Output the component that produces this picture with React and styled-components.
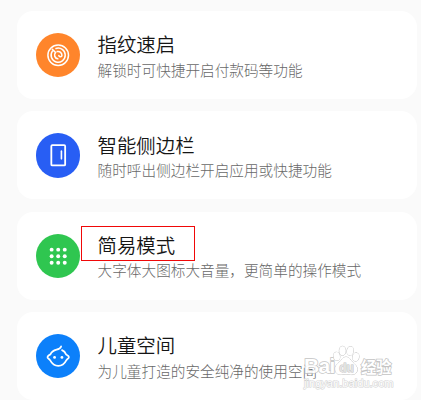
import React from "react";
import styled, { createGlobalStyle } from "styled-components";

const GlobalStyle = createGlobalStyle`
  * { box-sizing: border-box; }
  body {
    margin: 0;
    overflow: hidden;
    background: #fafafa;
    font-family: "Noto Sans CJK SC", sans-serif;
  }
`;

const Page = styled.main`
  position: relative;
  width: 421px;
  height: 400px;
  padding: 11px 4px 0 17px;
  overflow: hidden;
`;

const CardList = styled.div`
  display: flex;
  flex-direction: column;
  gap: 12.4px;
`;

const Card = styled.section`
  display: flex;
  flex: none;
  align-items: center;
  gap: 17.2px;
  height: 88px;
  padding-left: 19px;
  border-radius: 16px;
  background: #fff;
`;

const IconCircle = styled.div`
  display: flex;
  flex: none;
  width: 44.4px;
  height: 44.4px;
  border-radius: 50%;
  background: ${(p) => p.$color};

  svg { width: 100%; height: 100%; }
`;

const CardText = styled.div`
  display: flex;
  flex-direction: column;
  padding-top: 0.8px;
  white-space: nowrap;
`;

const Title = styled.h2`
  position: relative;
  margin: 0;
  align-self: flex-start;
  font-size: 19.4px;
  line-height: 28px;
  font-weight: 350;
  color: #151515;
`;

const Subtitle = styled.p`
  margin: 0.5px 0 0;
  font-size: 14.65px;
  line-height: 22px;
  font-weight: 300;
  color: #686868;
`;

const Highlight = styled.span`
  position: absolute;
  left: -16.6px;
  top: -5px;
  width: 114px;
  height: 35px;
  border: 1px solid #f00808;
`;

const Watermark = styled.div`
  position: absolute;
  left: 304px;
  top: 345px;
  width: 90px;
  color: #fff;
  font-family: "Liberation Sans", "Noto Sans CJK SC", sans-serif;
  -webkit-text-stroke: 1.5px #bdbdbd;
  paint-order: stroke fill;
  opacity: 0.9;
`;

const Brand = styled.div`
  display: flex;
  align-items: flex-end;
  height: 31px;
`;

const BrandText = styled.span`
  width: 28px;
  font-size: 21px;
  line-height: 21px;
  font-weight: 700;
  letter-spacing: -0.7px;
`;

const BrandChinese = styled.span`
  margin-left: 1px;
  font-family: "Noto Sans CJK SC", sans-serif;
  font-size: 15.5px;
  line-height: 19px;
  font-weight: 700;
  letter-spacing: -0.5px;
  white-space: nowrap;
`;

const Paw = styled.svg`
  flex: none;
  width: 28px;
  height: 31px;
`;

const Site = styled.div`
  font-size: 11px;
  line-height: 15px;
  letter-spacing: 0.05px;
  white-space: nowrap;
  -webkit-text-stroke: 1.1px #cecece;
`;

const FingerprintIcon = () => (
  <svg viewBox="0 0 44 44" fill="none" stroke="#fff" strokeWidth="1.5" strokeLinecap="round">
    <circle cx="22" cy="22" r="10.2" />
    <path d="M19.8 15.3A7 7 0 1 1 16.2 18" />
    <path d="M16.2 16.2L19.4 19.4A3.7 3.7 0 0 0 21.6 25.6" />
    <path d="M21 18.4A3.8 3.8 0 0 1 25.7 22.4C25.5 23.8 23.4 24 22.6 22.4" />
  </svg>
);

const SidebarIcon = () => (
  <svg viewBox="0 0 44 44" fill="none" stroke="#fff" strokeLinecap="round">
    <rect x="15.2" y="12.1" width="13.7" height="20" rx="1" strokeWidth="1.8" />
    <path d="M25.2 18v7.6" strokeWidth="1.6" />
  </svg>
);

const GridIcon = () => (
  <svg viewBox="0 0 44 44" fill="#fff">
    {[15.5, 22, 28.5].map((y) =>
      [15.5, 22, 28.5].map((x) => <circle key={`${x}-${y}`} cx={x} cy={y} r="1.95" />)
    )}
  </svg>
);

const ChildIcon = () => (
  <svg viewBox="0 0 44 44" fill="none" stroke="#fff" strokeWidth="1.7" strokeLinecap="round" strokeLinejoin="round">
    <path d="M24.9 12.3C24.4 14.1 23.3 14.7 20.4 15.5C17.5 16.3 15.2 18 14.3 20.2C12.2 21.3 10.8 22.5 11.6 23.7C12.1 24.5 13.3 24.8 14.1 26.2C16 29.8 18.5 31.6 22.1 31.6S28.2 29.8 30 26.2C30.7 24.8 32 24.5 32.4 23.7C33.2 22.5 31.8 21.3 29.8 20.2C29 18.2 27.4 16.7 25.8 16" />
    <circle cx="18.4" cy="23.2" r="1.4" fill="#fff" stroke="none" />
    <circle cx="25.7" cy="23.2" r="1.4" fill="#fff" stroke="none" />
  </svg>
);

const PawLogo = () => (
  <Paw viewBox="0 0 28 31" fill="#fff" stroke="#bdbdbd" strokeWidth="1">
    <ellipse cx="4.7" cy="11.3" rx="3.2" ry="4.2" transform="rotate(-12 4.7 11.3)" />
    <ellipse cx="10.5" cy="5.8" rx="3.2" ry="4.5" />
    <ellipse cx="18.2" cy="5.9" rx="3.2" ry="4.5" transform="rotate(10 18.2 5.9)" />
    <ellipse cx="23.8" cy="12" rx="3.2" ry="4.2" transform="rotate(14 23.8 12)" />
    <path d="M14 12C10.8 12 9.7 15.2 7.3 17.3C4.3 19.9 2.7 21.5 3.2 25C3.7 28.6 6.6 30 9.9 29.4C12.5 28.9 15.6 28.9 18.2 29.4C22.5 30.2 25.1 28.2 25.3 24.8C25.5 21.5 23.3 19.8 20.7 17.3C18.4 15.1 17.7 12 14 12Z" />
    <text x="7.2" y="26.7" fontSize="12" fontWeight="700" fontFamily="Liberation Sans, sans-serif" fill="#e2e2e2">du</text>
  </Paw>
);

const items = [
  { title: "指纹速启", subtitle: "解锁时可快捷开启付款码等功能", color: "#ff852b", Icon: FingerprintIcon },
  { title: "智能侧边栏", subtitle: "随时呼出侧边栏开启应用或快捷功能", color: "#285ef4", Icon: SidebarIcon },
  { title: "简易模式", subtitle: "大字体大图标大音量，更简单的操作模式", color: "#2fc650", Icon: GridIcon, highlighted: true },
  { title: "儿童空间", subtitle: "为儿童打造的安全纯净的使用空间", color: "#0c80fa", Icon: ChildIcon },
];

export default function App() {
  return (
    <>
      <GlobalStyle />
      <Page>
        <CardList>
          {items.map(({ title, subtitle, color, Icon, highlighted }) => (
            <Card key={title}>
              <IconCircle $color={color}><Icon /></IconCircle>
              <CardText>
                <Title>{title}{highlighted && <Highlight />}</Title>
                <Subtitle>{subtitle}</Subtitle>
              </CardText>
            </Card>
          ))}
        </CardList>
        <Watermark>
          <Brand>
            <BrandText>Bai</BrandText>
            <PawLogo />
            <BrandChinese>经验</BrandChinese>
          </Brand>
          <Site>jingyan.baidu.com</Site>
        </Watermark>
      </Page>
    </>
  );
}
